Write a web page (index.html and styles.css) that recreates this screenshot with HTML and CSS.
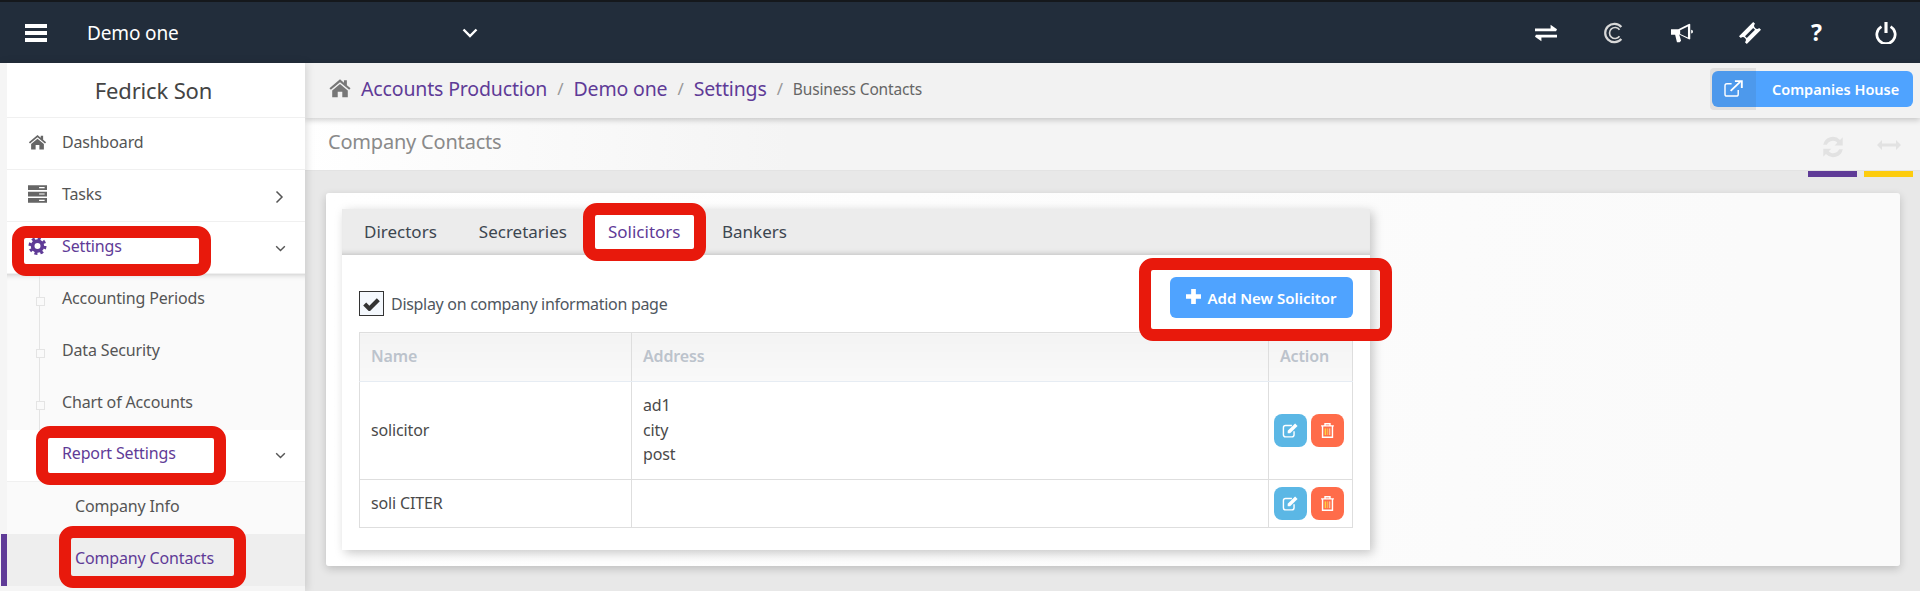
FILE: index.html
```html
<!DOCTYPE html>
<html lang="en">
<head>
    <meta charset="UTF-8">
    <meta name="viewport" content="width=device-width, initial-scale=1.0">
    <title>Company Contacts</title>
    <link rel="stylesheet" href="styles.css">
</head>
<body>
    <svg class="sprite" aria-hidden="true">
        <symbol id="i-edit" viewBox="0 0 24 24">
            <path d="M17 13v5a3 3 0 0 1-3 3H5a3 3 0 0 1-3-3V8a3 3 0 0 1 3-3h9" fill="none" stroke="currentColor" stroke-width="2"/>
            <path d="M8 12.500 18.500 2l3.500 3.500L11.500 16H8z" fill="currentColor"/>
        </symbol>
        <symbol id="i-trash" viewBox="0 0 24 24">
            <path d="M3 5.500h18M8.500 5V2.500h7V5M5 6v15.500h14V6" fill="none" stroke="currentColor" stroke-width="2"/>
            <path d="M9 9v9.500" stroke="#ffd23f" stroke-width="2"/>
            <path d="M12 9v9.500" stroke="#ffb04a" stroke-width="2"/>
            <path d="M15 9v9.500" stroke="#ffc0a0" stroke-width="2"/>
        </symbol>
        <symbol id="i-home" viewBox="0 0 24 24">
            <path d="M12 2.500 0.500 12.300l1.500 1.700L12 5.600 22 14l1.500-1.700-4-3.400V3.500h-3.200v2.700z" fill="currentColor"/>
            <path d="M12 7.700 3.500 14.800V22h6v-6h5v6h6v-7.200z" fill="currentColor"/>
        </symbol>
    </svg>

    <header class="topbar">
        <svg class="burger" viewBox="0 0 22 18"><path d="M0 0h22v4H0zM0 7h22v4H0zM0 14h22v4H0z" fill="currentColor"/></svg>
        <span class="company-name">Demo one</span>
        <svg class="company-caret" viewBox="0 0 16 10"><path d="M1.500 1.500 8 8l6.500-6.500" fill="none" stroke="currentColor" stroke-width="2.400"/></svg>
        <nav class="top-icons">
            <svg viewBox="0 0 24 18"><path d="M0 4h17V0l7 5-1 2H0zM24 11H1l-1 2 7 5v-4h17z" fill="currentColor"/></svg>
            <svg viewBox="0 0 24 24"><path d="M20 5.500a10 10 0 1 0 0 13" fill="none" stroke="#d8d8d8" stroke-width="2.400"/><path d="M18 8.500a6 6 0 1 0 0 7" fill="none" stroke="#d8d8d8" stroke-width="1.800"/></svg>
            <svg viewBox="0 0 24 22"><path d="M0 7h8L20 1l1 .5v16l-1 .5-11-5.500 2 7-1.500 1.500H6.500L4.500 13H0zM18.500 4 10 8v4l8.500 4zM22 7.500a2 2 0 0 1 0 4z" fill="currentColor" fill-rule="evenodd"/></svg>
            <svg viewBox="0 0 24 24"><path d="M15.500 0l2 2a2.200 2.200 0 0 0 4.500 4.500l2 2L8.500 24l-2-2A2.200 2.200 0 0 0 2 17.500l-2-2zM15.500 6.500 6.500 15.500l2 2 9-9z" fill="currentColor" fill-rule="evenodd"/></svg>
            <span class="help-mark">?</span>
            <svg viewBox="0 0 24 24"><path d="M7 5a10 10 0 1 0 10 0" fill="none" stroke="currentColor" stroke-width="3"/><path d="M12 0v12" stroke="currentColor" stroke-width="3.400"/></svg>
        </nav>
    </header>

    <div class="layout">
        <aside class="sidebar">
            <div class="user-name">Fedrick Son</div>
            <a class="side-row">
                <svg class="side-icon"><use href="#i-home"/></svg>
                Dashboard
            </a>
            <a class="side-row">
                <svg class="side-icon" viewBox="0 0 24 22"><path d="M0 0h24v6H0zM0 8h24v6H0zM0 16h24v6H0z" fill="currentColor"/><path d="M14 3h7M14 11h7M14 19h7" stroke="#fff" stroke-width="1.500"/></svg>
                Tasks
                <svg class="side-caret right" viewBox="0 0 10 14"><path d="M2 1.500 7.500 7 2 12.500" fill="none" stroke="currentColor" stroke-width="1.500"/></svg>
            </a>
            <a class="side-row open">
                <svg class="side-icon" viewBox="0 0 24 24"><circle cx="12" cy="12" r="6.500" fill="none" stroke="currentColor" stroke-width="5"/><circle cx="12" cy="12" r="10" fill="none" stroke="currentColor" stroke-width="4" stroke-dasharray="4 3.850"/></svg>
                Settings
                <svg class="side-caret" viewBox="0 0 14 10"><path d="M1.500 2 7 7.500 12.500 2" fill="none" stroke="#555" stroke-width="1.800"/></svg>
            </a>
            <div class="sub-list">
                <a class="sub-row">Accounting Periods</a>
                <a class="sub-row">Data Security</a>
                <a class="sub-row">Chart of Accounts</a>
            </div>
            <a class="side-row open nested">
                Report Settings
                <svg class="side-caret" viewBox="0 0 14 10"><path d="M1.500 2 7 7.500 12.500 2" fill="none" stroke="#555" stroke-width="1.800"/></svg>
            </a>
            <a class="leaf-row">Company Info</a>
            <a class="leaf-row active">Company Contacts</a>
        </aside>

        <main class="main">
            <div class="breadcrumb-bar">
                <svg class="crumb-home"><use href="#i-home"/></svg>
                <a class="crumb">Accounts Production</a>
                <span class="crumb-sep">/</span>
                <a class="crumb">Demo one</a>
                <span class="crumb-sep">/</span>
                <a class="crumb">Settings</a>
                <span class="crumb-sep">/</span>
                <span class="crumb-current">Business Contacts</span>
                <button class="house-btn">
                    <span class="house-icon">
                        <svg viewBox="0 0 20 18"><path d="M15 10.500V15a2 2 0 0 1-2 2H3a2 2 0 0 1-2-2V6a2 2 0 0 1 2-2h5" fill="none" stroke="currentColor" stroke-width="1.500"/><path d="M7 11.500 17 2M11.500 1.200h7.300v7.300" fill="none" stroke="currentColor" stroke-width="2"/></svg>
                    </span>
                    Companies House
                </button>
            </div>
            <div class="title-bar">
                <h1>Company Contacts</h1>
                <div class="title-tool purple">
                    <svg viewBox="0 0 24 24"><path d="M3 10a9 9 0 0 1 15.500-4.500L21 3v7.500h-7.500L16 8a6 6 0 0 0-9.700 2zM21 14a9 9 0 0 1-15.500 4.500L3 21v-7.500h7.500L8 16a6 6 0 0 0 9.700-2z" fill="currentColor"/></svg>
                </div>
                <div class="title-tool yellow">
                    <svg viewBox="0 0 24 12"><path d="M0 6l5-5v3.500h14V1l5 5-5 5V7.500H5V11z" fill="currentColor"/></svg>
                </div>
            </div>

            <div class="content">
                <section class="card">
                    <div class="panel">
                        <div class="tabs">
                            <a class="tab">Directors</a>
                            <a class="tab">Secretaries</a>
                            <a class="tab active">Solicitors</a>
                            <a class="tab">Bankers</a>
                        </div>
                        <div class="panel-body">
                            <div class="panel-head">
                                <label class="check-label">
                                    <span class="check-box">
                                        <svg viewBox="0 0 20 16"><path d="M2 8l5.500 5.500L18 3" fill="none" stroke="currentColor" stroke-width="5"/></svg>
                                    </span>
                                    Display on company information page
                                </label>
                                <button class="add-btn">
                                    <svg viewBox="0 0 16 16"><path d="M5.500 0h5v5.500H16v5h-5.500V16h-5v-5.500H0v-5h5.500z" fill="currentColor"/></svg>
                                    Add New Solicitor
                                </button>
                            </div>
                            <table class="contacts">
                                <thead>
                                    <tr><th class="col-name">Name</th><th class="col-address">Address</th><th>Action</th></tr>
                                </thead>
                                <tbody>
                                    <tr class="row-tall">
                                        <td>solicitor</td>
                                        <td>ad1<br>city<br>post</td>
                                        <td class="actions">
                                            <button class="icon-btn edit"><svg><use href="#i-edit"/></svg></button>
                                            <button class="icon-btn remove"><svg><use href="#i-trash"/></svg></button>
                                        </td>
                                    </tr>
                                    <tr>
                                        <td>soli CITER</td>
                                        <td></td>
                                        <td class="actions">
                                            <button class="icon-btn edit"><svg><use href="#i-edit"/></svg></button>
                                            <button class="icon-btn remove"><svg><use href="#i-trash"/></svg></button>
                                        </td>
                                    </tr>
                                </tbody>
                            </table>
                        </div>
                    </div>
                </section>
            </div>
        </main>
    </div>

    <!-- red annotation boxes drawn on the screenshot -->
    <div class="mark mark-settings"></div>
    <div class="mark mark-report"></div>
    <div class="mark mark-contacts"></div>
    <div class="mark mark-tab"></div>
    <div class="mark mark-add"></div>
</body>
</html>
```

FILE: styles.css
```css
* {
    box-sizing: border-box;
}
html, body {
    height: 100%;
}
body {
    margin: 0;
    font-family: "Noto Sans", "Open Sans", sans-serif;
    font-size: 16px;
    letter-spacing: -0.15px;
    color: #555;
    overflow: hidden;
    background: #e8e8e8;
}
.sprite {
    display: none;
}
a {
    color: inherit;
    text-decoration: none;
}
button {
    font-family: inherit;
    border: none;
    color: #fff;
    cursor: pointer;
}

/* top bar */
.topbar {
    display: flex;
    align-items: center;
    height: 63px;
    padding-left: 25px;
    background: #222d3b;
    border-top: 2px solid #15181c;
    color: #fff;
}
.burger {
    width: 22px;
    height: 18px;
}
.company-name {
    margin-left: 40px;
    width: 375px;
    font-size: 19px;
}
.company-caret {
    width: 16px;
    height: 10px;
}
.top-icons {
    display: flex;
    align-items: center;
    margin-left: auto;
    height: 100%;
    color: #fff;
}
.top-icons svg {
    display: block;
    width: 22px;
    height: 22px;
    margin-right: 46px;
}
.top-icons svg:last-child {
    margin-right: 23px;
}
.help-mark {
    width: 14px;
    margin: 0 50px 0 4px;
    font-size: 23px;
    font-weight: 700;
    line-height: 1;
}

/* sidebar */
.layout {
    display: flex;
    height: calc(100% - 63px);
}
.sidebar {
    flex: none;
    width: 305px;
    padding-left: 7px;
    background: #f5f5f5;
    box-shadow: 2px 0 8px rgba(0, 0, 0, 0.12);
    position: relative;
    z-index: 2;
}
.user-name {
    height: 55px;
    line-height: 54px;
    text-align: center;
    padding-right: 5px;
    font-size: 22px;
    color: #444;
    background: #fff;
    border-bottom: 1px solid #f0f0f0;
}
.side-row {
    display: flex;
    align-items: center;
    height: 52px;
    padding: 0 19px 3px 55px;
    background: #fff;
    border-bottom: 1px solid #f0f0f0;
    position: relative;
}
.side-icon {
    position: absolute;
    left: 21px;
    top: 15px;
    width: 19px;
    height: 18px;
    color: #666;
}
.side-caret {
    margin: 5px 0 0 auto;
    width: 11px;
    height: 11px;
    color: #555;
}
.side-caret.right {
    height: 14px;
    margin-right: 1px;
}
.side-row.open {
    color: #5f3b97;
}
.side-row.open .side-icon {
    color: #5f3b97;
}
.side-row.nested {
    padding-bottom: 5px;
}
.sub-list {
    background: #fafafa;
    box-shadow: inset 0 6px 6px -6px rgba(0, 0, 0, 0.25);
    position: relative;
}
.sub-row {
    display: flex;
    align-items: center;
    height: 52px;
    padding: 0 0 5px 55px;
    position: relative;
}
.sub-list::before {
    content: "";
    position: absolute;
    left: 32px;
    top: 0;
    bottom: 0;
    border-left: 1px solid #e4e4e4;
}
.sub-row::before {
    content: "";
    position: absolute;
    left: 29px;
    top: 23px;
    width: 7px;
    height: 7px;
    background: #fafafa;
    border: 1px solid #e4e4e4;
}
.leaf-row {
    display: flex;
    align-items: center;
    height: 52px;
    padding: 0 0 5px 68px;
    background: #fafafa;
}
.leaf-row.active {
    background: #eee;
    color: #5f3b97;
    box-shadow: -6px 0 0 #5f3b97;
}

/* main column */
.main {
    flex: 1;
    min-width: 0;
    display: flex;
    flex-direction: column;
}
.breadcrumb-bar {
    display: flex;
    align-items: center;
    height: 55px;
    padding: 0 7px 4px 23px;
    background: #f2f2f2;
    box-shadow: 0 2px 6px rgba(0, 0, 0, 0.2);
    position: relative;
    z-index: 1;
}
.crumb-home {
    width: 24px;
    height: 22px;
    margin: -2px 9px 0 0;
    color: #777;
}
.crumb {
    font-size: 19.500px;
    color: #5f3b97;
}
.crumb-sep {
    margin: 0 10px;
    font-size: 17px;
    color: #999;
}
.crumb-current {
    font-size: 15.500px;
    color: #666;
}
.house-btn {
    display: flex;
    align-items: center;
    margin-left: auto;
    width: 201px;
    height: 36px;
    padding: 0;
    background: #4fa3ff;
    border-radius: 6px;
    font-size: 14.500px;
    font-weight: 600;
    white-space: nowrap;
}
.house-icon {
    display: flex;
    align-items: center;
    justify-content: center;
    flex: none;
    width: 46px;
    height: 42px;
    margin: 0 16px 0 -2px;
    background: rgba(70, 70, 70, 0.1);
    border-radius: 4px 0 0 4px;
}
.house-icon svg {
    width: 19px;
    height: 17px;
}
.title-bar {
    display: flex;
    align-items: flex-start;
    height: 53px;
    padding: 0 7px 0 23px;
    background: linear-gradient(to right, #fff, #f4f4f4 30%);
    border-bottom: 1px solid #e3e3e3;
    position: relative;
}
.title-bar h1 {
    margin: 10px auto 0 0;
    font-size: 20px;
    font-weight: 400;
    letter-spacing: -0.2px;
    color: #8a8a8a;
}
.title-tool {
    width: 49px;
    height: 59px;
    margin-left: 7px;
    padding-top: 16px;
    text-align: center;
    color: #e2e2e2;
}
.title-tool.purple {
    border-bottom: 6px solid #5f3b97;
}
.title-tool.yellow {
    border-bottom: 6px solid #fdcc0d;
}
.title-tool svg {
    width: 26px;
    height: 26px;
}
.title-tool.yellow svg {
    width: 24px;
    height: 12px;
    margin-top: 5px;
}

/* card and tabs */
.content {
    flex: 1;
    padding: 22px 20px 0 21px;
    background: #e8e8e8;
}
.card {
    height: 373px;
    padding: 16px 0 0 16px;
    background: linear-gradient(to right, #fff, #fafafa 90%);
    border-radius: 3px;
    box-shadow: 0 3px 8px rgba(0, 0, 0, 0.18);
}
.panel {
    width: 1028px;
    height: 341px;
    background: #fff;
    box-shadow: 3px 3px 10px rgba(0, 0, 0, 0.22);
}
.tabs {
    display: flex;
    height: 46px;
    background: #ececec;
    box-shadow: inset 0 -6px 6px -6px rgba(0, 0, 0, 0.25);
}
.tab {
    display: flex;
    align-items: center;
    height: 46px;
    padding: 0 20px 2px 22px;
    font-size: 17px;
    letter-spacing: 0;
    color: #3c4650;
}
.tab.active {
    width: 113px;
    padding-left: 21px;
    background: #fff;
    color: #5f3b97;
}
.panel-body {
    padding: 22px 17px 0;
}
.panel-head {
    display: flex;
    align-items: flex-start;
    justify-content: space-between;
    height: 55px;
}
.check-label {
    display: flex;
    align-items: center;
    gap: 7px;
    margin-top: 14px;
    font-size: 16px;
    letter-spacing: -0.3px;
    color: #4f5760;
}
.check-box {
    display: flex;
    align-items: center;
    justify-content: center;
    width: 25px;
    height: 25px;
    background: #f4f8fd;
    border: 1px solid #333;
    color: #333;
}
.check-box svg {
    width: 17px;
    height: 14px;
}
.add-btn {
    display: flex;
    align-items: center;
    justify-content: center;
    gap: 6px;
    width: 183px;
    height: 41px;
    background: #4fa3ff;
    border-radius: 6px;
    font-size: 15px;
    font-weight: 600;
    letter-spacing: 0;
}
.add-btn svg {
    width: 15px;
    height: 15px;
    margin-top: -3px;
}

/* table */
.contacts {
    width: 994px;
    border-collapse: collapse;
    table-layout: fixed;
    font-size: 16px;
    color: #4a4a4a;
}
.contacts th,
.contacts td {
    height: 48px;
    padding: 0 11px 1px;
    border: 1px solid #dedede;
    text-align: left;
    line-height: 24.500px;
}
.contacts th {
    height: 49px;
    background: linear-gradient(#f3f3f3, #f9f9f9);
    border-bottom-color: #e6ecf3;
    font-weight: 600;
    color: #bcc3cc;
}
.col-name {
    width: 272px;
}
.col-address {
    width: 637px;
}
.row-tall td {
    height: 98px;
}
.contacts td.actions {
    padding: 0 0 0 5px;
    white-space: nowrap;
    font-size: 0;
}
.icon-btn {
    display: inline-flex;
    align-items: center;
    justify-content: center;
    width: 33px;
    height: 33px;
    padding: 0;
    margin-right: 4px;
    border-radius: 8px;
    vertical-align: middle;
}
.icon-btn svg {
    width: 19px;
    height: 17px;
}
.icon-btn.edit {
    background: #5bb7e5;
}
.icon-btn.remove {
    background: #ff6c4a;
}

/* annotations */
.mark {
    position: absolute;
    border: 12px solid #e8190c;
    border-radius: 14px;
    z-index: 5;
}
.mark-settings {
    left: 12px;
    top: 226px;
    width: 199px;
    height: 50px;
}
.mark-report {
    left: 36px;
    top: 426px;
    width: 190px;
    height: 59px;
}
.mark-contacts {
    left: 59px;
    top: 526px;
    width: 187px;
    height: 62px;
}
.mark-tab {
    left: 583px;
    top: 203px;
    width: 123px;
    height: 58px;
}
.mark-add {
    left: 1139px;
    top: 258px;
    width: 253px;
    height: 83px;
}
```
